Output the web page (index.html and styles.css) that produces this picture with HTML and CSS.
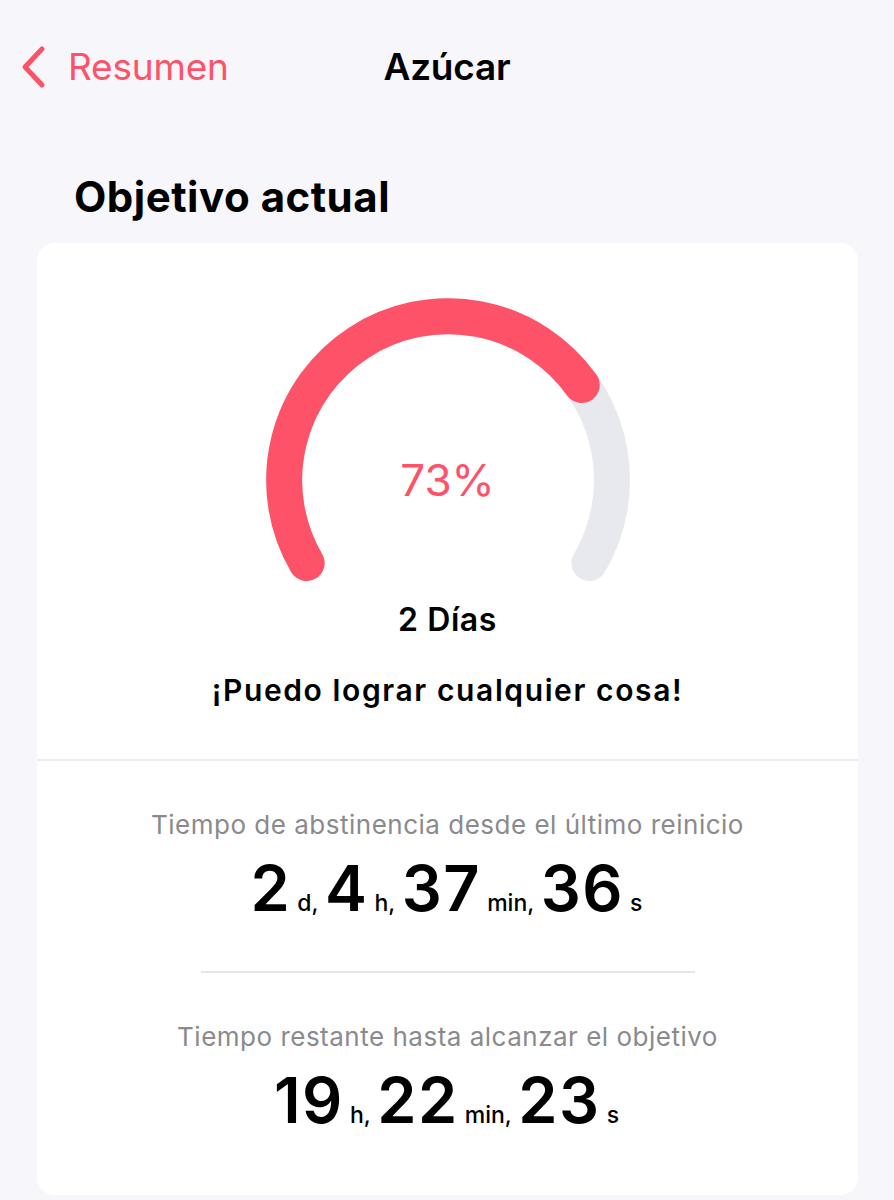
FILE: index.html
```html
<!DOCTYPE html>
<html lang="es">
<head>
    <meta charset="UTF-8">
    <meta name="viewport" content="width=device-width, initial-scale=1.0">
    <title>Azúcar</title>
    <link rel="stylesheet" href="styles.css">
</head>
<body>
    <header class="navbar">
        <a class="back" href="#">
            <svg class="chevron" width="26" height="44" viewBox="0 0 26 44">
                <path d="M22 4 L5 22 L22 40" fill="none" stroke="#fe5268" stroke-width="5" stroke-linecap="round" stroke-linejoin="round"/>
            </svg>
            <span>Resumen</span>
        </a>
        <h2 class="nav-title">Azúcar</h2>
    </header>

    <h1 class="section-title">Objetivo actual</h1>

    <div class="card">
        <div class="goal">
            <div class="gauge">
                <svg width="372" height="292" viewBox="0 0 372 292">
                    <path d="M44.6 269 A164 164 0 1 1 327.4 269" fill="none" stroke="#e8e9ee" stroke-width="36" stroke-linecap="round"/>
                    <path d="M44.6 269 A164 164 0 0 1 319.7 91" fill="none" stroke="#fe5268" stroke-width="36" stroke-linecap="round"/>
                </svg>
                <div class="percent">73%</div>
            </div>
            <div class="days">2 Días</div>
            <div class="motto">¡Puedo lograr cualquier cosa!</div>
        </div>

        <div class="times">
            <div class="time-block">
                <div class="time-label">Tiempo de abstinencia desde el último reinicio</div>
                <div class="time-value">
                    <span class="num">2</span><span class="unit">d,</span>
                    <span class="num">4</span><span class="unit">h,</span>
                    <span class="num">37</span><span class="unit">min,</span>
                    <span class="num">36</span><span class="unit">s</span>
                </div>
            </div>
            <hr class="sep">
            <div class="time-block">
                <div class="time-label">Tiempo restante hasta alcanzar el objetivo</div>
                <div class="time-value">
                    <span class="num">19</span><span class="unit">h,</span>
                    <span class="num">22</span><span class="unit">min,</span>
                    <span class="num">23</span><span class="unit">s</span>
                </div>
            </div>
        </div>
    </div>
</body>
</html>
```

FILE: styles.css
```css
body {
    margin: 0;
    background-color: #f7f7fb;
    font-family: Inter, "Noto Sans", sans-serif;
    color: #000;
}

.navbar {
    position: relative;
    height: 132px;
    display: flex;
    align-items: center;
    justify-content: center;
}

.back {
    position: absolute;
    left: 20px;
    top: 44px;
    display: flex;
    align-items: center;
    gap: 22px;
    color: #fe5268;
    text-decoration: none;
    font-size: 37px;
    letter-spacing: -0.2px;
}

.chevron {
    display: block;
}

.nav-title {
    margin: 0;
    font-size: 37px;
    font-weight: 600;
    letter-spacing: -0.2px;
}

.section-title {
    margin: 40px 0 21px 74px;
    font-size: 42px;
    font-weight: 700;
    letter-spacing: 0.5px;
    line-height: 50px;
}

.card {
    background-color: #fff;
    margin: 0 36px 0 37px;
    border-radius: 18px;
    overflow: hidden;
}

.goal {
    padding: 51px 0 49px;
    display: flex;
    flex-direction: column;
    align-items: center;
    border-bottom: 2px solid #ececef;
}

.gauge {
    position: relative;
    width: 372px;
    height: 292px;
}

.gauge svg {
    display: block;
}

.percent {
    position: absolute;
    left: 0;
    right: 0;
    top: 161px;
    text-align: center;
    color: #fe5268;
    font-size: 44px;
    line-height: 50px;
}

.days {
    margin-top: 14px;
    font-size: 32px;
    font-weight: 600;
    line-height: 40px;
    letter-spacing: 0.6px;
}

.motto {
    margin-top: 30px;
    font-size: 30px;
    font-weight: 600;
    line-height: 40px;
    letter-spacing: 1.6px;
}

.times {
    padding: 47px 0 42px;
}

.time-block {
    text-align: center;
}

.time-label {
    color: #8a8a8e;
    font-size: 26px;
    line-height: 34px;
    letter-spacing: 0.5px;
}

.time-value {
    margin-top: 10px;
    line-height: 72px;
}

.num {
    font-size: 63px;
    font-weight: 600;
    letter-spacing: 1.5px;
}

.unit {
    font-size: 23px;
    font-weight: 500;
    margin: 0 2px 0 6px;
}

.sep {
    width: 494px;
    margin: 30px auto 47px;
    border: none;
    border-top: 2px solid #e6e6e9;
}
```
